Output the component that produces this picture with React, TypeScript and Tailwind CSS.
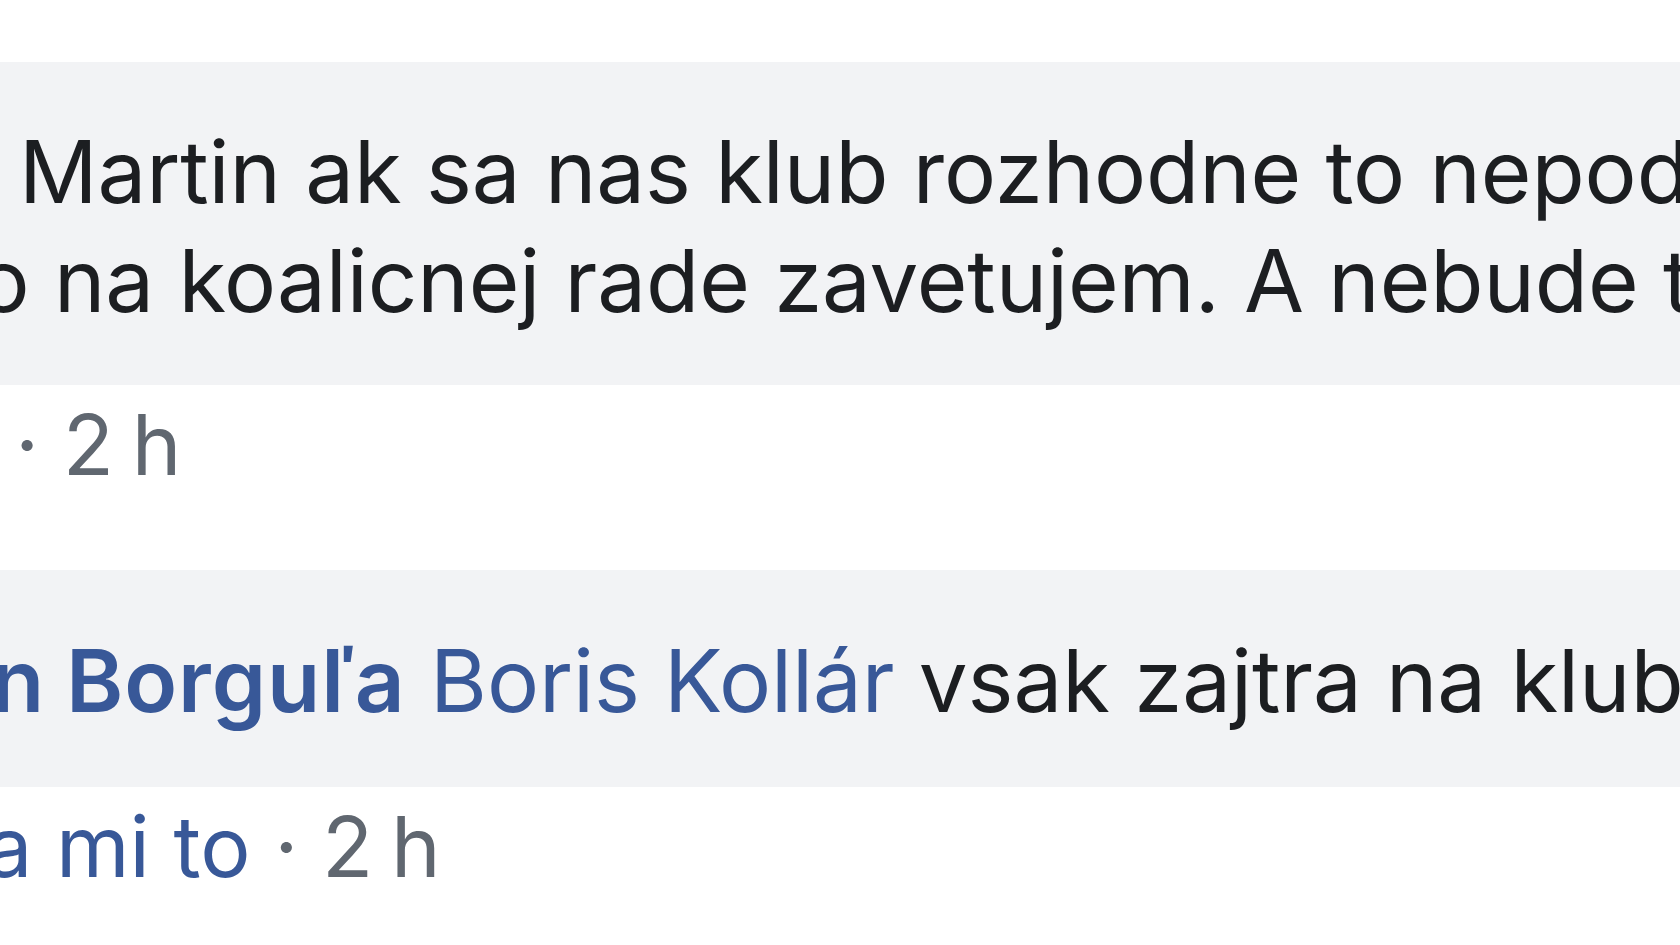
import React from "react";

export default function App() {
  return (
    <div className="w-full h-[945px] overflow-hidden bg-white pt-[62px] font-['Inter','Liberation_Sans',sans-serif] antialiased">
      {/* Comment 1 */}
      <div className="bg-[#f2f3f5] pt-[55px] pb-[50px] text-[87px] tracking-[-0.1px] leading-[109px] text-[#1c1e21]">
        <div className="flex whitespace-nowrap">
          <span className="w-[19px] shrink-0 flex justify-end">
            <span className="shrink-0 font-semibold text-[#385898]">Boris Kollár&nbsp;</span>
          </span>
          <span className="shrink-0">Martin ak sa nas klub rozhodne to nepodporovat, tak</span>
        </div>
        <div className="flex whitespace-nowrap">
          <span className="w-[54px] shrink-0 flex justify-end">
            <span className="shrink-0">tak to&nbsp;</span>
          </span>
          <span className="shrink-0">na koalicnej rade zavetujem. A nebude to tak.</span>
        </div>
      </div>
      <div className="mt-[10px] text-[84px] leading-[100px] flex whitespace-nowrap">
        <span className="w-[15px] shrink-0 flex justify-end">
          <span className="shrink-0 text-[#385898]">Odpovedať&nbsp;</span>
        </span>
        <span className="shrink-0 text-[#606770]">
          · 2<span className="ml-[-6px]">&nbsp;h</span>
        </span>
      </div>

      {/* Comment 2 */}
      <div className="mt-[75px] bg-[#f2f3f5] pt-[56px] pb-[52px] text-[87px] tracking-[-0.1px] leading-[109px] text-[#1c1e21]">
        <div className="flex whitespace-nowrap">
          <span className="w-[66px] shrink-0 flex justify-end">
            <span className="shrink-0 font-semibold text-[#385898]">Martin&nbsp;</span>
          </span>
          <span className="shrink-0">
            <span className="font-semibold tracking-[0.9px] text-[#385898]">Borguľa</span>{" "}
            <span className="text-[#385898]">Boris Kollár</span> vsak zajtra na klube
          </span>
        </div>
      </div>
      <div className="mt-[10px] text-[84px] leading-[100px] flex whitespace-nowrap">
        <span className="w-[56px] shrink-0 flex justify-end">
          <span className="shrink-0 text-[#385898]">Páči sa&nbsp;</span>
        </span>
        <span className="shrink-0">
          <span className="text-[#385898]">mi to</span>
          <span className="text-[#606770]">
            {" "}· 2<span className="ml-[-6px]">&nbsp;h</span>
          </span>
        </span>
      </div>
    </div>
  );
}
